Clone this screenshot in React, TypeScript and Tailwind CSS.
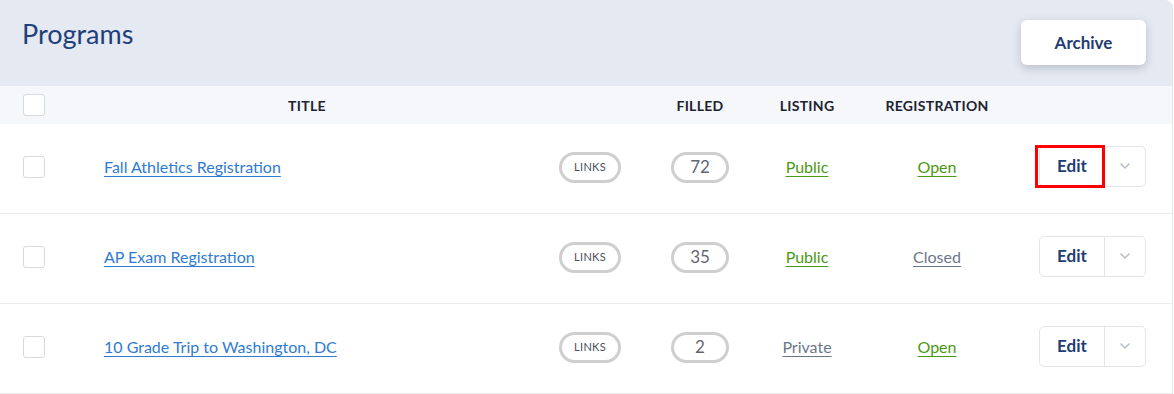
import { FiChevronDown } from "react-icons/fi";

type Row = {
  title: string;
  filled: number;
  listing: "Public" | "Private";
  registration: "Open" | "Closed";
  focused?: boolean;
};

const rows: Row[] = [
  { title: "Fall Athletics Registration", filled: 72, listing: "Public", registration: "Open", focused: true },
  { title: "AP Exam Registration", filled: 35, listing: "Public", registration: "Closed" },
  { title: "10 Grade Trip to Washington, DC", filled: 2, listing: "Private", registration: "Open" },
];

const cols = "grid grid-cols-[80px_454px_112px_108px_106px_154px_1fr] items-center";

const Checkbox = () => (
  <span className="ml-[23px] block h-[22px] w-[22px] rounded-[3px] border border-[#d6d9de] bg-white" />
);

const statusColor = (v: string) =>
  v === "Public" || v === "Open" ? "text-[#4a9912] decoration-[#4a9912]" : "text-[#6b7788] decoration-[#6b7788]";

const App = () => {
  return (
    <div className="h-[394px] w-[1174px] bg-white font-['Lato',sans-serif]">
      <div className="w-[1173px] overflow-hidden rounded-tr-[8px] border-r border-[#e4e6ea]">
        {/* page header */}
        <div className="flex h-[86px] items-start justify-between bg-[#e4e9f2] pl-[22px] pr-[26px]">
          <h1 className="pt-[17px] text-[27px] leading-[34px] text-[#21407a]">Programs</h1>
          <button className="mt-[20px] h-[45px] w-[125px] rounded-[6px] bg-white text-[17px] font-bold text-[#1f3d73] shadow-[0_3px_8px_rgba(60,70,90,0.25)]">
            Archive
          </button>
        </div>

        {/* table header */}
        <div className={`${cols} h-[38px] bg-[#f5f7fa] text-[14px] font-bold tracking-[0.3px] text-[#1c2331]`}>
          <Checkbox />
          <div className="text-center">TITLE</div>
          <div />
          <div className="text-center">FILLED</div>
          <div className="text-center">LISTING</div>
          <div className="text-center">REGISTRATION</div>
          <div />
        </div>

        {rows.map((r) => (
          <div key={r.title} className={`${cols} h-[90px] border-b border-[#ececec] bg-white pb-[3px]`}>
            <Checkbox />
            <div className="pl-[24px]">
              <a href="#" className="text-[16px] text-[#2f7bd3] underline decoration-[#2f7bd3] underline-offset-[3px]">
                {r.title}
              </a>
            </div>
            <div className="flex justify-center">
              <span className="flex h-[31px] w-[62px] items-center justify-center rounded-full border-[3px] border-[#cfcfcf] text-[11px] tracking-[0.3px] text-[#4a505a]">
                LINKS
              </span>
            </div>
            <div className="flex justify-center">
              <span className="flex h-[31px] w-[58px] items-center justify-center rounded-full border-[3px] border-[#cfcfcf] text-[17px] text-[#5f6672]">
                {r.filled}
              </span>
            </div>
            <div className="text-center">
              <a href="#" className={`text-[16px] underline underline-offset-[3px] ${statusColor(r.listing)}`}>
                {r.listing}
              </a>
            </div>
            <div className="text-center">
              <a href="#" className={`text-[16px] underline underline-offset-[3px] ${statusColor(r.registration)}`}>
                {r.registration}
              </a>
            </div>
            <div className="flex justify-end pb-[2px] pr-[26px]">
              <div className="flex h-[41px] w-[107px] rounded-[5px] border border-[#e3e5e9] bg-white">
                <div className="relative flex w-[64px] items-center justify-center text-[17px] font-bold text-[#1f3d73]">
                  Edit
                  {r.focused && (
                    <span className="absolute -bottom-[2px] -left-[5px] -right-[1px] -top-[2px] border-[3px] border-[#ff0000]" />
                  )}
                </div>
                <div className="flex flex-1 items-center justify-center border-l border-[#e3e5e9] text-[#b9c0ca]">
                  <FiChevronDown size={16} strokeWidth={2.5} />
                </div>
              </div>
            </div>
          </div>
        ))}
      </div>
    </div>
  );
};

export default App;
